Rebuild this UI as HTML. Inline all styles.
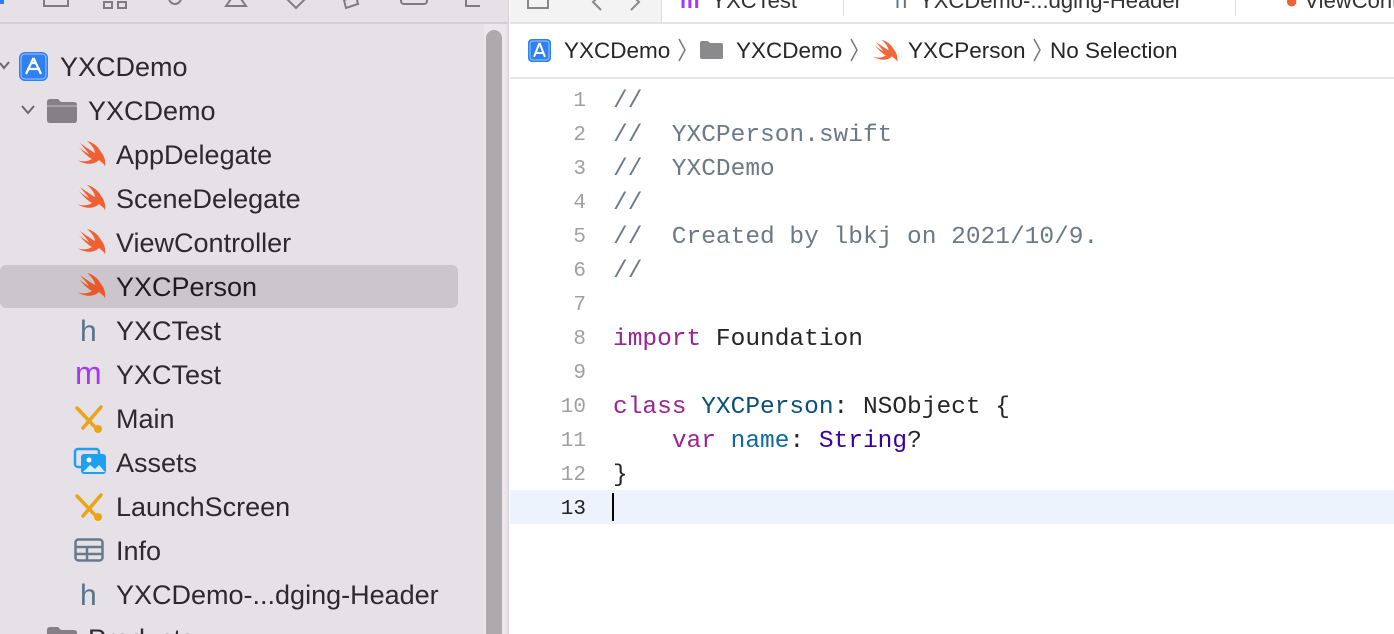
<!DOCTYPE html>
<html style="width:1394px;height:634px;overflow:hidden"><head><meta charset="utf-8"><style>
*{margin:0;padding:0;box-sizing:border-box}
body{width:1394px;height:634px;overflow:hidden;background:#fff;font-family:"Liberation Sans",sans-serif;position:relative}
.sb{position:absolute;left:0;top:0;width:509px;height:634px;overflow:hidden;background:#e6e1e6;border-right:1px solid #d6d2d6}
.tbline{position:absolute;left:0;top:22px;width:509px;height:2px;background:#d3cfd3}
.track{position:absolute;left:484px;top:24px;width:22px;height:610px;background:#ebe7eb}
.thumb{position:absolute;left:486px;top:30px;width:16px;height:620px;border-radius:8px;background:#acaaac}
.row{position:absolute;height:44px;line-height:45px;font-size:27px;color:#2b2a2d}
.sel{position:absolute;left:0;top:265px;width:458px;height:43px;border-radius:6px;background:#cbc6cb}
.ic{position:absolute}
.ed .ln{position:absolute;left:520px;width:66px;text-align:right;font-family:"Liberation Mono",monospace;font-size:21px;color:#a0a0a0;height:34px;line-height:38px}
.code{position:absolute;left:613px;font-family:"Liberation Mono",monospace;font-size:24.5px;height:34px;line-height:38px;white-space:pre;color:#262626}
.cm{color:#6c7986}.kw{color:#9b2393}.ty{color:#0b4f79}.st{color:#3900a0}.nm{color:#0f68a0}
.bc{position:absolute;top:36px;font-size:22.5px;color:#262626;height:28px;line-height:30px}
.chev{position:absolute;top:36px;width:10px;height:28px}
</style></head><body>
<div class="sb">
<div class="tbline"></div>
<svg class="ic" style="left:0;top:0" width="480" height="20"><g fill="none" stroke="#807b80" stroke-width="2">
<rect x="44" y="-6" width="24" height="12"/><rect x="104" y="2" width="8" height="6"/><rect x="118" y="2" width="8" height="6"/>
<circle cx="175" cy="-2" r="6"/><path d="M226 6 L236 -8 L246 6 Z"/><path d="M286 -2 L296 8 L306 -2"/><path d="M344 0 l12 -4 l2 8 l-12 4z"/><rect x="401" y="-8" width="26" height="12" rx="3"/><rect x="466" y="-6" width="16" height="12"/></g>
<rect x="0" y="-6" width="4" height="10" fill="#2a7bf6"/></svg>
<div class="track"></div><div class="thumb"></div>
<div class="sel"></div>
<svg class="ic" style="left:0;top:58px" width="12" height="16"><path d="M0 5 L4 10 L9 4" stroke="#6b676b" stroke-width="2" fill="none"/></svg>
<svg class="ic" style="left:20px;top:102px" width="18" height="16"><path d="M2 4 L8 11 L14 4" stroke="#6b676b" stroke-width="2" fill="none"/></svg>
<svg class="ic" style="left:18px;top:51px" width="32" height="32"><rect x="1" y="1" width="29" height="29" rx="6" fill="#2f80f0"/><rect x="3" y="3" width="25" height="25" rx="4" fill="none" stroke="#9cc4fb" stroke-width="1"/><path d="M15.5 7 L8 23 M15.5 7 L23 23 M9 18 H22 M13 12 L18 12" stroke="#fff" stroke-width="2.2" fill="none"/></svg>
<div class="row" style="left:60px;top:45px">YXCDemo</div>
<svg class="ic" style="left:46px;top:98px" width="32" height="26"><path d="M1 4 q0-3 3-3 h8 l3 3 h13 q3 0 3 3 v15 q0 3-3 3 H4 q-3 0-3-3z" fill="#838186"/><rect x="1" y="7" width="30" height="2" fill="#a3a1a6"/></svg>
<div class="row" style="left:88px;top:89px">YXCDemo</div>
<svg width="0" height="0" style="position:absolute"><defs><path id="sw" d="M2 20 C8 24 18 26 24 20 C27 23 30 24 30 27 C31 21 29 15 26 12 C23 6 17 2 12 1 C17 5 20 10 20 13 C15 10 9 6 5 3 C9 8 12 11 14 14 C10 12 6 9 4 7 C8 12 13 17 17 19 C12 22 6 22 2 20Z"/></defs></svg>
<svg class="ic" style="left:75px;top:140px" width="32" height="30"><use href="#sw" fill="#ef6035"/></svg>
<div class="row" style="left:116px;top:133px">AppDelegate</div>
<svg class="ic" style="left:75px;top:184px" width="32" height="30"><use href="#sw" fill="#ef6035"/></svg>
<div class="row" style="left:116px;top:177px">SceneDelegate</div>
<svg class="ic" style="left:75px;top:228px" width="32" height="30"><use href="#sw" fill="#ef6035"/></svg>
<div class="row" style="left:116px;top:221px">ViewController</div>
<svg class="ic" style="left:75px;top:272px" width="32" height="30"><use href="#sw" fill="#e85a2b"/></svg>
<div class="row" style="left:116px;top:265px;color:#1d1c1f">YXCPerson</div>
<div class="row" style="left:80px;top:309px;color:#5a7388;font-size:30px">h</div>
<div class="row" style="left:116px;top:309px">YXCTest</div>
<div class="row" style="left:75px;top:351px;color:#a239f5;font-size:32px">m</div>
<div class="row" style="left:116px;top:353px">YXCTest</div>
<svg class="ic" style="left:74px;top:404px" width="32" height="30"><g stroke="#eaa415" stroke-width="3.5" stroke-linecap="round"><path d="M3 4 L20 22"/><path d="M27 3 L9 24"/></g><circle cx="24" cy="25" r="4" fill="#eaa415"/></svg>
<div class="row" style="left:116px;top:397px">Main</div>
<svg class="ic" style="left:73px;top:446px" width="34" height="30"><rect x="2" y="3" width="24" height="18" rx="3" fill="none" stroke="#1ea0f0" stroke-width="2.5"/><rect x="8" y="8" width="25" height="20" rx="3" fill="#1ea0f0"/><circle cx="16" cy="14" r="2.5" fill="#fff"/><path d="M10 26 L17 19 L22 23 L26 19 L32 26Z" fill="#d8eefc"/></svg>
<div class="row" style="left:116px;top:441px">Assets</div>
<svg class="ic" style="left:74px;top:492px" width="32" height="30"><g stroke="#eaa415" stroke-width="3.5" stroke-linecap="round"><path d="M3 4 L20 22"/><path d="M27 3 L9 24"/></g><circle cx="24" cy="25" r="4" fill="#eaa415"/></svg>
<div class="row" style="left:116px;top:485px">LaunchScreen</div>
<svg class="ic" style="left:74px;top:538px" width="32" height="26"><rect x="1.5" y="1.5" width="27" height="21" rx="3" fill="none" stroke="#687a8a" stroke-width="2.5"/><path d="M2 9 H28 M2 16 H28 M13 9 V22" stroke="#687a8a" stroke-width="2.5"/></svg>
<div class="row" style="left:116px;top:529px">Info</div>
<div class="row" style="left:80px;top:573px;color:#5a7388;font-size:30px">h</div>
<div class="row" style="left:116px;top:573px">YXCDemo-...dging-Header</div>
<svg class="ic" style="left:46px;top:626px" width="32" height="10"><path d="M1 4 q0-3 3-3 h8 l3 3 h13 q3 0 3 3 v5 H1z" fill="#838186"/></svg>
<div class="row" style="left:88px;top:617px">Products</div>
</div>

<div style="position:absolute;left:510px;top:0;width:884px;height:22px;background:#fff"></div>
<div style="position:absolute;left:510px;top:0;width:152px;height:22px;background:#f3f3f3;border-right:1px solid #dcdcdc"></div>
<svg class="ic" style="left:525px;top:0" width="120" height="12"><g fill="none" stroke="#888" stroke-width="2"><rect x="3" y="-4" width="20" height="12"/><path d="M76 -6 L68 2 L76 10 M106 -6 L114 2 L106 10"/></g></svg>
<div style="position:absolute;left:680px;top:-12px;font-size:22px;color:#333;white-space:nowrap"><span style="color:#a239f5;font-weight:bold">m</span>&nbsp; YXCTest</div>
<div style="position:absolute;left:843px;top:0;width:1px;height:16px;background:#ddd"></div>
<div style="position:absolute;left:895px;top:-12px;font-size:22px;color:#333;white-space:nowrap"><span style="color:#5a7388">h</span>&nbsp; YXCDemo-...dging-Header</div>
<div style="position:absolute;left:1235px;top:0;width:1px;height:16px;background:#ddd"></div>
<div style="position:absolute;left:1285px;top:-12px;font-size:22px;color:#333;white-space:nowrap"><span style="color:#ef6035">●</span> ViewController</div>
<div style="position:absolute;left:510px;top:22px;width:884px;height:2px;background:#e3e3e3"></div>
<div style="position:absolute;left:510px;top:77px;width:884px;height:2px;background:#e6e6e6"></div>

<svg class="ic" style="left:527px;top:38px" width="26" height="26"><rect x="1" y="1" width="23" height="23" rx="4" fill="#2f80f0"/><rect x="3" y="3" width="19" height="19" rx="3" fill="none" stroke="#9cc4fb"/><path d="M12.5 5 L7 19 M12.5 5 L18 19 M8 15 H17" stroke="#fff" stroke-width="2" fill="none"/></svg>
<div class="bc" style="left:564px">YXCDemo</div>
<svg class="chev" style="left:677px"><path d="M2 3 L8 14 L2 25" stroke="#777" stroke-width="1.5" fill="none"/></svg>
<svg class="ic" style="left:699px;top:40px" width="26" height="20"><path d="M1 3 q0-2 2-2 h6 l2 2 h11 q2 0 2 2 v12 q0 2-2 2 H3 q-2 0-2-2z" fill="#8a898c"/></svg>
<div class="bc" style="left:736px">YXCDemo</div>
<svg class="chev" style="left:849px"><path d="M2 3 L8 14 L2 25" stroke="#777" stroke-width="1.5" fill="none"/></svg>
<svg class="ic" style="left:871px;top:38px" width="28" height="28" viewBox="0 0 32 30"><use href="#sw" fill="#f2683a"/></svg>
<div class="bc" style="left:908px">YXCPerson</div>
<svg class="chev" style="left:1032px"><path d="M2 3 L8 14 L2 25" stroke="#777" stroke-width="1.5" fill="none"/></svg>
<div class="bc" style="left:1050px">No Selection</div>

<div style="position:absolute;left:510px;top:490px;width:884px;height:34px;background:#ecf3fd"></div>
<div style="position:absolute;left:612px;top:493px;width:2px;height:28px;background:#000"></div>
<div class="ed">
<div class="ln" style="top:83px">1</div><div class="ln" style="top:117px">2</div><div class="ln" style="top:151px">3</div><div class="ln" style="top:185px">4</div><div class="ln" style="top:219px">5</div><div class="ln" style="top:253px">6</div><div class="ln" style="top:287px">7</div><div class="ln" style="top:321px">8</div><div class="ln" style="top:355px">9</div><div class="ln" style="top:389px">10</div><div class="ln" style="top:423px">11</div><div class="ln" style="top:457px">12</div><div class="ln" style="top:491px;color:#222">13</div>
</div>
<div class="code cm" style="top:83px">//</div>
<div class="code cm" style="top:117px">//  YXCPerson.swift</div>
<div class="code cm" style="top:151px">//  YXCDemo</div>
<div class="code cm" style="top:185px">//</div>
<div class="code cm" style="top:219px">//  Created by lbkj on 2021/10/9.</div>
<div class="code cm" style="top:253px">//</div>
<div class="code" style="top:321px"><span class="kw">import</span> Foundation</div>
<div class="code" style="top:389px"><span class="kw">class</span> <span class="ty">YXCPerson</span>: NSObject {</div>
<div class="code" style="top:423px">    <span class="kw">var</span> <span class="nm">name</span>: <span class="st">String</span>?</div>
<div class="code" style="top:457px">}</div>
</body></html>
